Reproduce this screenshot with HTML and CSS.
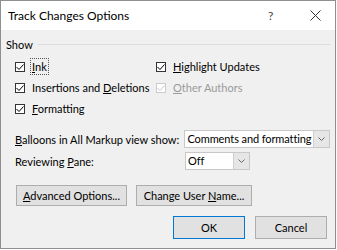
FILE: index.html
```html
<!DOCTYPE html>
<html lang="en">
<head>
    <meta charset="UTF-8">
    <title>Track Changes Options</title>
    <link rel="stylesheet" href="styles.css">
</head>
<body>
    <div class="window">
        <div class="titlebar">
            <span class="title">Track Changes Options</span>
            <span class="help">?</span>
            <span class="close">
                <svg width="11" height="11" viewBox="0 0 11 11"><path d="M0.5 0.5 L10.5 10.5 M10.5 0.5 L0.5 10.5" stroke="#333" stroke-width="1" fill="none"/></svg>
            </span>
        </div>
        <div class="content">
            <div class="group-head"><span>Show</span><div class="rule"></div></div>

            <div class="checks">
                <label class="check"><span class="box"><svg width="8" height="8" viewBox="0 0 8 8"><path d="M0.5 4 L3 6.5 L7.5 1.5" stroke="#000" fill="none"/></svg></span><span class="focus"><u>I</u>nk</span></label>
                <label class="check"><span class="box"><svg width="8" height="8" viewBox="0 0 8 8"><path d="M0.5 4 L3 6.5 L7.5 1.5" stroke="#000" fill="none"/></svg></span><span><u>H</u>ighlight Updates</span></label>
                <label class="check"><span class="box"><svg width="8" height="8" viewBox="0 0 8 8"><path d="M0.5 4 L3 6.5 L7.5 1.5" stroke="#000" fill="none"/></svg></span><span>Insertions and <u>D</u>eletions</span></label>
                <label class="check disabled"><span class="box"><svg width="8" height="8" viewBox="0 0 8 8"><path d="M0.5 4 L3 6.5 L7.5 1.5" stroke="#c8c8c8" fill="none"/></svg></span><span><u>O</u>ther Authors</span></label>
                <label class="check"><span class="box"><svg width="8" height="8" viewBox="0 0 8 8"><path d="M0.5 4 L3 6.5 L7.5 1.5" stroke="#000" fill="none"/></svg></span><span><u>F</u>ormatting</span></label>
            </div>

            <div class="field first">
                <span class="label"><u>B</u>alloons in All Markup view show:</span>
                <div class="select wide">
                    <span class="value">Comments and formatting</span>
                    <span class="drop"><svg width="7" height="4" viewBox="0 0 7 4"><path d="M0.5 0.5 L3.5 3.5 L6.5 0.5" stroke="#666" fill="none"/></svg></span>
                </div>
            </div>
            <div class="field">
                <span class="label">Reviewing <u>P</u>ane:</span>
                <div class="select narrow">
                    <span class="value">Off</span>
                    <span class="drop"><svg width="7" height="4" viewBox="0 0 7 4"><path d="M0.5 0.5 L3.5 3.5 L6.5 0.5" stroke="#666" fill="none"/></svg></span>
                </div>
            </div>

            <div class="btn-row">
                <button class="btn adv"><u>A</u>dvanced Options...</button>
                <button class="btn user">Change User <u>N</u>ame...</button>
            </div>
            <div class="footer">
                <button class="btn big default">OK</button>
                <button class="btn big">Cancel</button>
            </div>
        </div>
    </div>
</body>
</html>
```

FILE: styles.css
```css
body {
margin: 0;
background: #fff;
font-family: Lato, "Liberation Sans", sans-serif;
font-size: 11px;
color: #000;
white-space: nowrap;
}

u {text-decoration: underline; text-underline-offset: 1px;}

.window {
width: 336px;
height: 249px;
box-sizing: border-box;
border: 1px solid #8f8f8f;
display: flex;
flex-direction: column;
}

.titlebar {
height: 29px;
background: #fff;
display: flex;
align-items: center;
padding-left: 7px;
}
.title {font-size: 12px; width: 260px;}
.help {font-size: 12px; color: #444; width: 42px;}
.close {display: flex;}

.content {
flex: 1;
background: #f0f0f0;
padding: 7px 5px 0 5px;
}

.group-head {
display: flex;
align-items: center;
gap: 5px;
height: 14px;
}
.rule {flex: 1; height: 1px; background: #dcdcdc;}

.checks {
display: grid;
grid-template-columns: 141px auto;
row-gap: 4px;
margin: 7px 0 0 9px;
}
.check {
display: flex;
align-items: center;
gap: 7px;
height: 17px;
}
.box {
width: 8px;
height: 8px;
border: 1px solid #333;
background: #fff;
display: flex;
}
.focus {outline: 1px dotted #555; outline-offset: 1px;}
.disabled {color: #9a9a9a;}
.disabled .box {border-color: #cccccc;}

.field {
display: flex;
align-items: center;
margin-left: 9px;
height: 20px;
margin-top: 2px;
}
.field.first {margin-top: 12px;}
.label {width: 170px;}
.select {
display: flex;
height: 18px;
box-sizing: border-box;
border: 1px solid #c8c8c8;
background: #fff;
}
.select .value {flex: 1; padding-left: 2px; line-height: 16px; overflow: hidden; letter-spacing: -0.1px;}
.select .drop {
width: 15px;
flex: none;
background: #e6e6e6;
border-left: 1px solid #d0d0d0;
display: flex;
align-items: center;
justify-content: center;
}
.wide {width: 146px;}
.narrow {width: 65px;}

.btn {
font-family: inherit;
font-size: 11px;
font-weight: normal;
background: #e1e1e1;
border: 1px solid #adadad;
padding: 0;
height: 21px;
color: #000;
}
.btn-row {
display: flex;
gap: 9px;
margin: 14px 0 0 10px;
}
.adv {width: 111px;}
.user {width: 116px;}

.footer {
display: flex;
justify-content: flex-end;
gap: 10px;
margin: 10px 3px 0 0;
}
.big {width: 72px; height: 23px;}
.default {border-color: #0078d7;}
```
